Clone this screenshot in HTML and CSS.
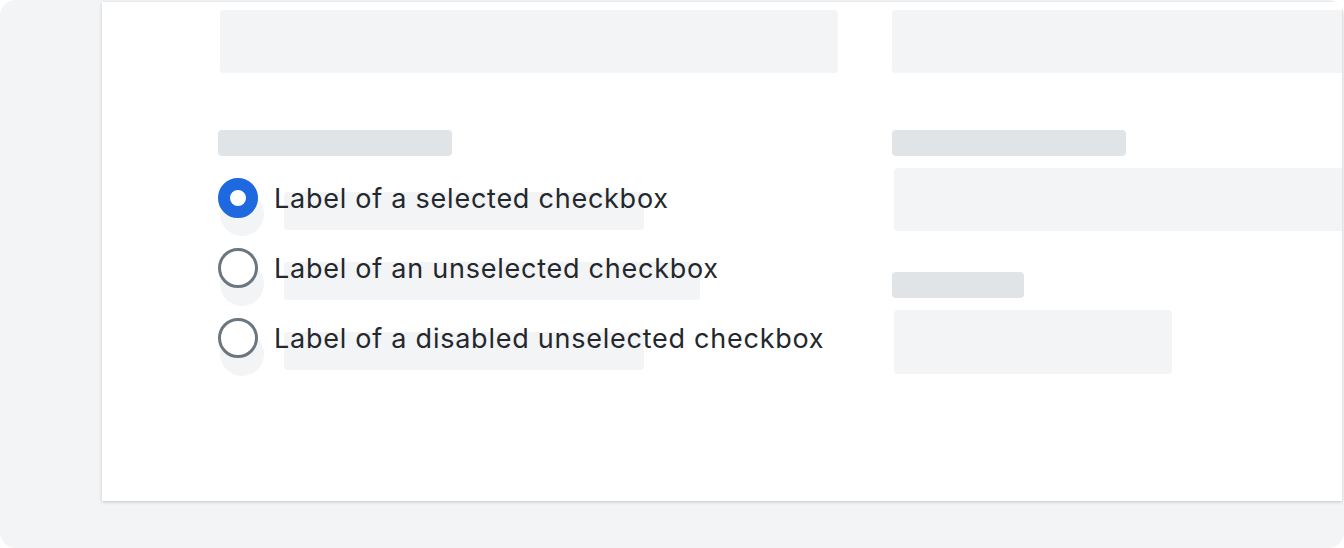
FILE: index.html
```html
<!DOCTYPE html>
<html>
<head>
<meta charset="utf-8">
<link rel="stylesheet" href="styles.css">
</head>
<body>
<div class="frame">
  <div class="card">
    <div class="col col-left">
      <div class="sk-input sk-input-left"></div>
      <div class="sk-label sk-label-left"></div>
      <div class="radios">
        <div class="row">
          <span class="sk-dot"></span><span class="sk-bar bar-a"></span>
          <span class="radio radio-on"></span>
          <span class="text">Label of a selected checkbox</span>
        </div>
        <div class="row">
          <span class="sk-dot"></span><span class="sk-bar bar-b"></span>
          <span class="radio"></span>
          <span class="text">Label of an unselected checkbox</span>
        </div>
        <div class="row">
          <span class="sk-dot"></span><span class="sk-bar bar-a"></span>
          <span class="radio"></span>
          <span class="text">Label of a disabled unselected checkbox</span>
        </div>
      </div>
    </div>
    <div class="col col-right">
      <div class="sk-input sk-input-r1"></div>
      <div class="sk-label sk-label-r1"></div>
      <div class="sk-input sk-input-r2"></div>
      <div class="sk-label sk-label-r2"></div>
      <div class="sk-input sk-input-r3"></div>
    </div>
  </div>
</div>
</body>
</html>
```
FILE: styles.css
```css
html, body {
  margin: 0;
  padding: 0;
  background: #ffffff;
}
.frame {
  width: 1344px;
  height: 548px;
  background: #f3f4f6;
  border-radius: 16px;
  overflow: hidden;
  padding-top: 2px;
  padding-left: 102px;
  box-sizing: border-box;
}
.card {
  width: 1240px;
  height: 499px;
  background: #ffffff;
  box-shadow: 0 1px 4px rgba(0, 0, 0, 0.14), 0 1px 2px rgba(0, 0, 0, 0.06);
  display: flex;
  padding-left: 116px;
  box-sizing: border-box;
  overflow: hidden;
}
.col {
  display: flex;
  flex-direction: column;
  align-items: flex-start;
  flex-shrink: 0;
}
.col-left {
  width: 674px;
}
.col-right {
  width: 500px;
}
.sk-input {
  background: #f3f4f6;
  border-radius: 4px;
  flex-shrink: 0;
}
.sk-label {
  background: #e1e4e6;
  border-radius: 4px;
  height: 26px;
  flex-shrink: 0;
}
.sk-input-left {
  margin-top: 8px;
  margin-left: 2px;
  width: 618px;
  height: 63px;
}
.sk-label-left {
  margin-top: 57px;
  width: 234px;
}
.radios {
  margin-top: 22px;
  display: flex;
  flex-direction: column;
  gap: 30px;
}
.row {
  position: relative;
  display: flex;
  align-items: center;
  gap: 16px;
  height: 40px;
}
.sk-dot {
  position: absolute;
  left: 2px;
  top: 14px;
  width: 44px;
  height: 44px;
  border-radius: 50%;
  background: #f3f4f6;
}
.sk-bar {
  position: absolute;
  left: 66px;
  top: 14px;
  height: 38px;
  border-radius: 4px;
  background: #f3f4f6;
}
.bar-a { width: 360px; }
.bar-b { width: 416px; }
.radio {
  position: relative;
  width: 40px;
  height: 40px;
  border-radius: 50%;
  box-sizing: border-box;
  border: 3px solid #6b7780;
  background: #ffffff;
  flex-shrink: 0;
}
.radio-on {
  border: 12px solid #1f69e0;
}
.text {
  position: relative;
  top: 1px;
  font-family: Inter, "Liberation Sans", sans-serif;
  font-size: 27px;
  letter-spacing: 0.75px;
  line-height: 40px;
  color: #24282c;
  white-space: nowrap;
}
.sk-input-r1 {
  margin-top: 8px;
  width: 500px;
  height: 63px;
}
.sk-label-r1 {
  margin-top: 57px;
  width: 234px;
}
.sk-input-r2 {
  margin-top: 12px;
  margin-left: 2px;
  width: 500px;
  height: 63px;
}
.sk-label-r2 {
  margin-top: 41px;
  width: 132px;
}
.sk-input-r3 {
  margin-top: 12px;
  margin-left: 2px;
  width: 278px;
  height: 64px;
}
```
